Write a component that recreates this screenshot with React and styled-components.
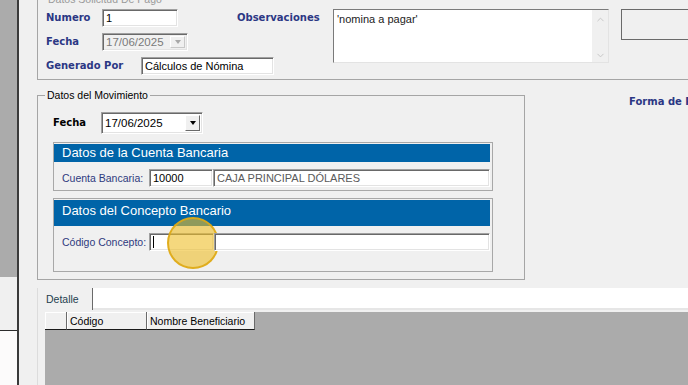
import React from "react";
import styled, { createGlobalStyle } from "styled-components";
import { ChevronUp, ChevronDown } from "lucide-react";

const GlobalStyle = createGlobalStyle`
  html, body {
    margin: 0;
    padding: 0;
    background: #f0f0f0;
  }
  body {
    width: 688px;
    height: 385px;
    overflow: hidden;
    font-family: "Liberation Sans", Arial, sans-serif;
    font-size: 11px;
    color: #000;
  }
  * { box-sizing: border-box; }
`;

const Screen = styled.div`
  display: flex;
  width: 688px;
  height: 385px;
  overflow: hidden;
`;

const SideStrip = styled.div`
  width: 19px;
  flex: none;
  display: flex;
  flex-direction: column;
  border-right: 2px solid #3a3a3a;
`;

const StripBlock = styled.div`
  height: ${(p) => (p.$h ? `${p.$h}px` : "auto")};
  flex: ${(p) => (p.$h ? "none" : "1")};
  background: ${(p) => p.$bg};
  border-bottom: ${(p) => (p.$line ? "1px solid #2c2c2c" : "none")};
`;

const Main = styled.div`
  flex: 1;
  min-width: 0;
  background: #f0f0f0;
  padding-left: 18px;
  display: flex;
  flex-direction: column;
  overflow: hidden;
`;

const GroupBox = styled.fieldset`
  margin: ${(p) => p.$margin || "0"};
  padding: 0 0 ${(p) => p.$pb || 0}px 6px;
  border: 1px solid #a5a5a5;
  width: ${(p) => p.$w}px;
  flex: none;
  min-width: 0;
`;

const Legend = styled.legend`
  margin-left: ${(p) => p.$ml || 1}px;
  padding: 0 2px;
  font-size: 10.5px;
  line-height: 12px;
  color: ${(p) => (p.$dim ? "#9a9a9a" : "#000")};
`;

const TopGrid = styled.div`
  display: grid;
  grid-template-columns: 56px 135px 96px 276px 12px 100px;
  grid-template-rows: 18px 18px 18px;
  row-gap: 6px;
  padding: 4px 0 4px 2px;
`;

const Cell = styled.div`
  grid-column: ${(p) => p.$col};
  grid-row: ${(p) => p.$row};
  display: flex;
  align-items: ${(p) => p.$align || "center"};
  min-width: 0;
`;

const BoldLabel = styled.span`
  font-family: "DejaVu Sans", Verdana, sans-serif;
  font-weight: bold;
  font-size: 10px;
  line-height: 12px;
  color: ${(p) => p.$color || "#2b3784"};
  white-space: nowrap;
  width: ${(p) => (p.$w ? `${p.$w}px` : "auto")};
  flex: none;
`;

const TextBox = styled.div`
  width: ${(p) => (p.$w ? `${p.$w}px` : "auto")};
  flex: ${(p) => (p.$w ? "none" : "1")};
  height: 18px;
  display: flex;
  align-items: center;
  padding: 0 3px;
  background: #fff;
  color: ${(p) => (p.$dim ? "#5a5a5a" : "#000")};
  font-size: 11px;
  white-space: nowrap;
  border: 1px solid;
  border-color: #a0a0a0 #fff #fff #a0a0a0;
  box-shadow: inset 1px 1px 0 #696969, inset -1px -1px 0 #e3e3e3;
  position: relative;
`;

const Combo = styled.div`
  width: ${(p) => p.$w}px;
  height: ${(p) => p.$h}px;
  flex: none;
  display: flex;
  align-items: stretch;
  padding: 2px;
  background: ${(p) => (p.$disabled ? "#f0f0f0" : "#fff")};
  color: ${(p) => (p.$disabled ? "#7a7a7a" : "#000")};
  font-size: 11.5px;
  border: 1px solid;
  border-color: #a0a0a0 #fff #fff #a0a0a0;
  box-shadow: inset 1px 1px 0 #696969, inset -1px -1px 0 #e3e3e3;
`;

const ComboValue = styled.span`
  flex: 1;
  display: flex;
  align-items: center;
  padding-left: 1px;
`;

const DropButton = styled.span`
  width: 15px;
  flex: none;
  display: flex;
  align-items: center;
  justify-content: center;
  background: #f0f0f0;
  border: 1px solid;
  border-color: ${(p) =>
    p.$disabled ? "#fff #c8c8c8 #c8c8c8 #fff" : "#fff #696969 #696969 #fff"};
`;

const Arrow = styled.span`
  width: 0;
  height: 0;
  border-left: 3.5px solid transparent;
  border-right: 3.5px solid transparent;
  border-top: 4px solid ${(p) => (p.$disabled ? "#a8a8a8" : "#000")};
`;

const MemoBox = styled.div`
  height: 54px;
  flex: 1;
  display: flex;
  background: #fff;
  border: 1px solid;
  border-color: #7a7a7a #e3e3e3 #e3e3e3 #7a7a7a;
`;

const MemoText = styled.div`
  flex: 1;
  padding: 3px 3px;
  font-size: 11px;
  line-height: 13px;
  color: #222;
`;

const ScrollTrack = styled.div`
  width: 16px;
  display: flex;
  flex-direction: column;
  justify-content: space-between;
  align-items: center;
  padding: 4px 0 1px;
  background: #f0f0f0;
  color: #c4c4c4;
`;

const SideFrame = styled.div`
  flex: 1;
  height: 31px;
  border: 1px solid #6a6a6a;
`;

const MidRow = styled.div`
  display: flex;
  align-items: flex-start;
  margin-top: 9px;
`;

const MoveBody = styled.div`
  display: flex;
  flex-direction: column;
  padding: 11px 0 0 9px;
`;

const DateRow = styled.div`
  display: flex;
  align-items: center;
  height: 22px;
  margin-bottom: 8px;
`;

const Panel = styled.div`
  width: 440px;
  padding: 1px 2px ${(p) => p.$pb}px 0;
  border: 1px solid #a8a8a8;
  margin-bottom: ${(p) => p.$mb || 0}px;
`;

const PanelHeader = styled.div`
  height: ${(p) => p.$h}px;
  background: #0064a8;
  color: #fff;
  font-size: 13px;
  line-height: 16px;
  padding: ${(p) => p.$pt}px 0 0 8px;
  white-space: nowrap;
`;

const PanelRow = styled.div`
  display: flex;
  align-items: center;
  margin-top: 7px;
  padding-left: 8px;
`;

const FieldLabel = styled.span`
  width: 87px;
  flex: none;
  font-size: 10.5px;
  color: #2e3a7e;
  white-space: nowrap;
`;

const Caret = styled.span`
  display: inline-block;
  width: 1px;
  height: 12px;
  background: #000;
`;

const Highlight = styled.span`
  position: absolute;
  left: 17px;
  top: -17px;
  width: 52px;
  height: 52px;
  border-radius: 50%;
  background: rgba(238, 190, 40, 0.6);
  border: 2px solid rgba(222, 168, 20, 0.9);
  pointer-events: none;
`;

const SideTitle = styled(BoldLabel)`
  margin: 7px 0 0 104px;
`;

const TabArea = styled.div`
  margin-top: 8px;
  flex: 1;
  display: flex;
  flex-direction: column;
  border-left: 1px solid #dcdcdc;
`;

const TabStrip = styled.div`
  display: flex;
  height: 22px;
  flex: none;
`;

const Tab = styled.div`
  width: 55px;
  display: flex;
  align-items: center;
  padding-left: 8px;
  background: #f0f0f0;
  border-right: 1px solid #6a6a6a;
  font-size: 10.5px;
  color: #24404f;
`;

const TabFill = styled.div`
  flex: 1;
  background: #fff;
  border-bottom: 2px solid #e6e6e6;
`;

const TabPage = styled.div`
  flex: 1;
  display: flex;
  padding: 2px 0 0 7px;
  background: #f0f0f0;
`;

const GridView = styled.div`
  flex: 1;
  background: #ababab;
`;

const GridHeader = styled.div`
  display: flex;
  height: 18px;
`;

const HeadCell = styled.div`
  width: ${(p) => p.$w}px;
  display: flex;
  align-items: center;
  padding-left: 3px;
  background: #f0f0f0;
  font-size: 10.5px;
  border-right: 1px solid #6a6a6a;
  border-bottom: 1px solid #1a1a1a;
  box-shadow: inset 1px 1px 0 #fff;
`;

function Memo() {
  return (
    <MemoBox>
      <MemoText>'nomina a pagar'</MemoText>
      <ScrollTrack>
        <ChevronUp size={11} strokeWidth={2} />
        <ChevronDown size={11} strokeWidth={2} />
      </ScrollTrack>
    </MemoBox>
  );
}

export default function App() {
  return (
    <>
      <GlobalStyle />
      <Screen>
        <SideStrip>
          <StripBlock $h={277} $bg="#ababab" />
          <StripBlock $h={54} $bg="#f0f0f0" $line />
          <StripBlock $bg="#fcfbfb" />
        </SideStrip>

        <Main>
          <GroupBox $w={720} $margin="-7px 0 0 0">
            <Legend $dim $ml={2}>Datos Solicitud De Pago</Legend>
            <TopGrid>
              <Cell $col="1" $row="1">
                <BoldLabel>Numero</BoldLabel>
              </Cell>
              <Cell $col="2" $row="1">
                <TextBox $w={76}>1</TextBox>
              </Cell>
              <Cell $col="3" $row="1">
                <BoldLabel>Observaciones</BoldLabel>
              </Cell>
              <Cell $col="4" $row="1 / 4" $align="flex-start">
                <Memo />
              </Cell>
              <Cell $col="6" $row="1 / 3" $align="flex-start">
                <SideFrame />
              </Cell>

              <Cell $col="1" $row="2">
                <BoldLabel>Fecha</BoldLabel>
              </Cell>
              <Cell $col="2" $row="2">
                <Combo $w={86} $h={18} $disabled>
                  <ComboValue>17/06/2025</ComboValue>
                  <DropButton $disabled>
                    <Arrow $disabled />
                  </DropButton>
                </Combo>
              </Cell>

              <Cell $col="1 / 4" $row="3">
                <BoldLabel $w={95}>Generado Por</BoldLabel>
                <TextBox $w={133}>Cálculos de Nómina</TextBox>
              </Cell>
            </TopGrid>
          </GroupBox>

          <MidRow>
            <GroupBox $w={488} $pb={7}>
              <Legend>Datos del Movimiento</Legend>
              <MoveBody>
                <DateRow>
                  <BoldLabel $w={48} $color="#000">
                    Fecha
                  </BoldLabel>
                  <Combo $w={102} $h={22}>
                    <ComboValue>17/06/2025</ComboValue>
                    <DropButton>
                      <Arrow />
                    </DropButton>
                  </Combo>
                </DateRow>

                <Panel $pb={3} $mb={7}>
                  <PanelHeader $h={18} $pt={1}>
                    Datos de la Cuenta Bancaria
                  </PanelHeader>
                  <PanelRow>
                    <FieldLabel>Cuenta Bancaria:</FieldLabel>
                    <TextBox $w={64}>10000</TextBox>
                    <TextBox $dim>CAJA PRINCIPAL DÓLARES</TextBox>
                  </PanelRow>
                </Panel>

                <Panel $pb={20}>
                  <PanelHeader $h={26} $pt={3}>
                    Datos del Concepto Bancario
                  </PanelHeader>
                  <PanelRow>
                    <FieldLabel>Código Concepto:</FieldLabel>
                    <TextBox $w={65}>
                      <Caret />
                      <Highlight />
                    </TextBox>
                    <TextBox />
                  </PanelRow>
                </Panel>
              </MoveBody>
            </GroupBox>
            <SideTitle>Forma de Pago</SideTitle>
          </MidRow>

          <TabArea>
            <TabStrip>
              <Tab>Detalle</Tab>
              <TabFill />
            </TabStrip>
            <TabPage>
              <GridView>
                <GridHeader>
                  <HeadCell $w={22} />
                  <HeadCell $w={80}>Código</HeadCell>
                  <HeadCell $w={108}>Nombre Beneficiario</HeadCell>
                </GridHeader>
              </GridView>
            </TabPage>
          </TabArea>
        </Main>
      </Screen>
    </>
  );
}
